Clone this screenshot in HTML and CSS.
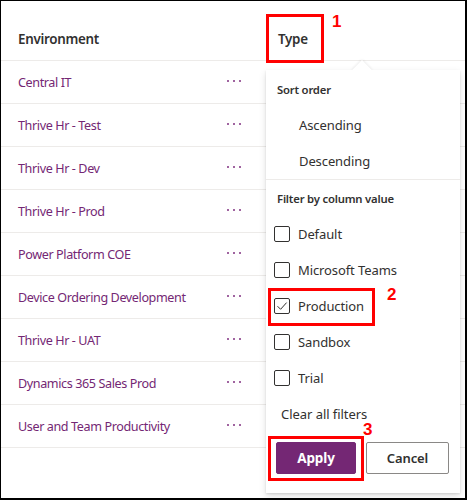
FILE: index.html
```html
<!DOCTYPE html>
<html>
<head>
<meta charset="utf-8">
<link rel="stylesheet" href="styles.css">
</head>
<body>
<div class="frame">
  <div class="list">
    <div class="row head">
      <div class="name">Environment</div>
      <div class="more"></div>
      <div class="type">Type</div>
    </div>
    <div class="row"><div class="name link">Central IT</div><div class="more"><span class="dots"><i></i><i></i><i></i></span></div><div class="type"></div></div>
    <div class="row"><div class="name link">Thrive Hr - Test</div><div class="more"><span class="dots"><i></i><i></i><i></i></span></div><div class="type"></div></div>
    <div class="row"><div class="name link">Thrive Hr - Dev</div><div class="more"><span class="dots"><i></i><i></i><i></i></span></div><div class="type"></div></div>
    <div class="row"><div class="name link">Thrive Hr - Prod</div><div class="more"><span class="dots"><i></i><i></i><i></i></span></div><div class="type"></div></div>
    <div class="row"><div class="name link">Power Platform COE</div><div class="more"><span class="dots"><i></i><i></i><i></i></span></div><div class="type"></div></div>
    <div class="row"><div class="name link">Device Ordering Development</div><div class="more"><span class="dots"><i></i><i></i><i></i></span></div><div class="type"></div></div>
    <div class="row"><div class="name link">Thrive Hr - UAT</div><div class="more"><span class="dots"><i></i><i></i><i></i></span></div><div class="type"></div></div>
    <div class="row"><div class="name link">Dynamics 365 Sales Prod</div><div class="more"><span class="dots"><i></i><i></i><i></i></span></div><div class="type"></div></div>
    <div class="row"><div class="name link">User and Team Productivity</div><div class="more"><span class="dots"><i></i><i></i><i></i></span></div><div class="type"></div></div>
  </div>

  <div class="callout">
    <div class="beak"></div>
    <div class="callout-body">
      <div class="sec-title">Sort order</div>
      <div class="menu-item">Ascending</div>
      <div class="menu-item">Descending</div>
      <div class="divider"></div>
      <div class="sec-title">Filter by column value</div>
      <div class="check-item"><span class="box"></span><span>Default</span></div>
      <div class="check-item"><span class="box"></span><span>Microsoft Teams</span></div>
      <div class="check-item"><span class="box"><svg width="14" height="14" viewBox="0 0 14 14"><path d="M2.5 7.2 L5.6 10.3 L11.6 3.6" fill="none" stroke="#323130" stroke-width="1"/></svg></span><span>Production</span></div>
      <div class="check-item"><span class="box"></span><span>Sandbox</span></div>
      <div class="check-item"><span class="box"></span><span>Trial</span></div>
      <div class="clear">Clear all filters</div>
      <div class="buttons">
        <button class="btn primary">Apply</button>
        <button class="btn">Cancel</button>
      </div>
    </div>
  </div>

  <div class="mark mark-type"></div>
  <div class="mark mark-prod"></div>
  <div class="mark mark-apply"></div>
  <div class="num num1">1</div>
  <div class="num num2">2</div>
  <div class="num num3">3</div>
</div>
</body>
</html>
```

FILE: styles.css
```css
html, body {
  margin: 0;
  padding: 0;
  background: #fff;
}
body {
  font-family: "Segoe UI", "Noto Sans", sans-serif;
  color: #323130;
  letter-spacing: -0.4px;
}
.frame {
  position: relative;
  width: 467px;
  height: 500px;
  box-sizing: border-box;
  border-style: solid;
  border-color: #000;
  border-width: 1px 2px 2px 1px;
  overflow: hidden;
  background: #fff;
}
.list {
  display: flex;
  flex-direction: column;
}
.row {
  display: flex;
  align-items: center;
  height: 42px;
  border-bottom: 1px solid #edebe9;
  font-size: 12.6px;
}
.row.head {
  height: 60px;
  box-sizing: border-box;
  padding-top: 16px;
  font-weight: 600;
  font-size: 13.4px;
  letter-spacing: -0.3px;
  color: #323130;
}
.name {
  width: 226px;
  box-sizing: border-box;
  padding-left: 17px;
  white-space: nowrap;
}
.link {
  color: #742774;
}
.more {
  width: 51px;
  display: flex;
  align-items: center;
}
.dots {
  display: flex;
  gap: 4px;
  margin-top: -2px;
}
.dots i {
  display: block;
  width: 2px;
  height: 2px;
  background: #a064a0;
}
.type {
  flex: 1;
}
.callout {
  position: absolute;
  left: 265px;
  top: 69px;
  width: 194px;
  height: 423px;
  background: #fff;
  box-shadow: 0 3.2px 7.2px rgba(0,0,0,0.13), 0 0.6px 1.8px rgba(0,0,0,0.11);
}
.beak {
  position: absolute;
  left: 89px;
  top: -7px;
  width: 14px;
  height: 14px;
  background: #fff;
  transform: rotate(45deg);
  box-shadow: 0 0 3px rgba(0,0,0,0.13);
}
.callout-body {
  position: relative;
  background: #fff;
  height: 100%;
  padding-top: 1px;
  box-sizing: border-box;
  display: flex;
  flex-direction: column;
}
.sec-title {
  height: 36px;
  display: flex;
  align-items: center;
  padding-left: 11px;
  font-size: 11.3px;
  font-weight: 600;
  letter-spacing: -0.2px;
  color: #323130;
}
.menu-item {
  height: 36px;
  display: flex;
  align-items: center;
  padding-left: 33px;
  font-size: 13px;
  letter-spacing: -0.1px;
}
.divider {
  height: 1px;
  background: #edebe9;
}
.check-item {
  height: 36px;
  display: flex;
  align-items: center;
  gap: 8px;
  padding-left: 8px;
  font-size: 13px;
  letter-spacing: -0.1px;
}
.box {
  width: 16px;
  height: 16px;
  box-sizing: border-box;
  border: 1px solid #323130;
  border-radius: 2px;
  display: flex;
  align-items: center;
  justify-content: center;
}
.box svg {
  display: block;
}
.clear {
  height: 36px;
  display: flex;
  align-items: center;
  padding-left: 15px;
  font-size: 13px;
  letter-spacing: -0.05px;
}
.buttons {
  display: flex;
  gap: 10px;
  margin-top: 10px;
  padding-left: 10px;
}
.btn {
  height: 32px;
  width: 83px;
  box-sizing: border-box;
  border: 1px solid #8a8886;
  border-radius: 2px;
  background: #fff;
  color: #323130;
  font-family: inherit;
  font-size: 13px;
  font-weight: 600;
  letter-spacing: -0.1px;
  padding: 0;
}
.btn.primary {
  width: 80px;
  background: #742774;
  border-color: #742774;
  color: #fff;
  font-weight: 700;
  font-size: 13.5px;
}
.mark {
  position: absolute;
  box-sizing: border-box;
  border: 3px solid #ff0000;
}
.mark-type {
  left: 265px;
  top: 13px;
  width: 58px;
  height: 49px;
}
.mark-prod {
  left: 267px;
  top: 287px;
  width: 107px;
  height: 38px;
}
.mark-apply {
  left: 267px;
  top: 435px;
  width: 96px;
  height: 45px;
}
.num {
  position: absolute;
  font-family: "Liberation Sans", Arial, sans-serif;
  font-weight: 700;
  font-size: 17px;
  line-height: 1;
  letter-spacing: 0;
  color: #ff0000;
}
.num1 { left: 331px; top: 12px; }
.num2 { left: 386px; top: 285px; }
.num3 { left: 362px; top: 420px; }
```
